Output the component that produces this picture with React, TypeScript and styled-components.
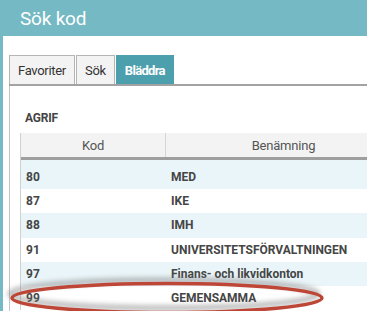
import React from "react";
import styled, { createGlobalStyle } from "styled-components";

const Global = createGlobalStyle`
  html, body { margin: 0; padding: 0; background: #ffffff; }
  body { font-family: Roboto, "Liberation Sans", Arial, sans-serif; }
`;

const Window = styled.div`
  position: relative;
  width: 367px;
  height: 311px;
  overflow: hidden;
  background: #74b9c3;
  display: flex;
  flex-direction: column;
`;

const Header = styled.div`
  height: 36px;
  flex: none;
  padding-left: 20px;
  display: flex;
  align-items: center;
  color: #ffffff;
  font-size: 19px;
  letter-spacing: -0.2px;
`;

const Body = styled.div`
  flex: 1;
  margin-left: 3px;
  background: #ffffff;
  padding: 19px 0 0 6px;
  display: flex;
  flex-direction: column;
  min-height: 0;
`;

const TabBar = styled.div`
  display: flex;
  border-bottom: 2px solid #a3a3a3;
`;

const Tab = styled.div<{ $active?: boolean }>`
  height: 28px;
  padding: 0 8px;
  margin-right: 1px;
  display: flex;
  align-items: center;
  font-size: 13px;
  letter-spacing: ${(p) => (p.$active ? "-0.7px" : "-0.3px")};
  border: 1px solid ${(p) => (p.$active ? "#4c9fac" : "#b5b5b5")};
  border-bottom: none;
  background: ${(p) => (p.$active ? "#4c9fac" : "#f3f3f3")};
  color: ${(p) => (p.$active ? "#ffffff" : "#333333")};
  font-weight: ${(p) => (p.$active ? 700 : 400)};
`;

const Panel = styled.div`
  flex: 1;
  border-left: 1px solid #c4c4c4;
  padding: 25px 0 0 10px;
`;

const Caption = styled.div`
  padding-left: 5px;
  font-size: 12px;
  font-weight: 700;
  color: #444444;
  letter-spacing: -0.2px;
  height: 22px;
`;

const Table = styled.div`
  width: 380px;
  border-left: 1px solid #d0d0d0;
`;

const HeadRow = styled.div`
  display: grid;
  grid-template-columns: 145px 1fr;
  height: 24px;
  background: #f3f3f3;
  border-bottom: 3px solid #9e9e9e;
`;

const HeadCell = styled.div<{ $divider?: boolean }>`
  display: flex;
  align-items: center;
  justify-content: center;
  font-size: 13px;
  color: #555555;
  letter-spacing: -0.2px;
  border-right: ${(p) => (p.$divider ? "1px solid #d6d6d6" : "none")};
`;

const RowGroup = styled.div`
  display: flex;
  flex-direction: column;
`;

const Row = styled.div<{ $striped?: boolean }>`
  display: grid;
  grid-template-columns: 145px 1fr;
  height: 24.3px;
  flex: none;
  background: ${(p) => (p.$striped ? "#eaf5f9" : "#ffffff")};
  &:first-child {
    height: 29px;
    padding-top: 4px;
    box-sizing: border-box;
  }
`;

const Cell = styled.div`
  display: flex;
  align-items: center;
  padding-left: 5px;
  font-size: 12px;
  font-weight: 700;
  color: #454545;
  letter-spacing: 0;
  white-space: nowrap;
`;

const Overlay = styled.svg`
  position: absolute;
  left: 0;
  top: 0;
  pointer-events: none;
`;

const rows = [
  ["80", "MED"],
  ["87", "IKE"],
  ["88", "IMH"],
  ["91", "UNIVERSITETSFÖRVALTNINGEN"],
  ["97", "Finans- och likvidkonton"],
  ["99", "GEMENSAMMA"],
];

export default function App() {
  return (
    <Window>
      <Global />
      <Header>Sök kod</Header>
      <Body>
        <TabBar>
          <Tab>Favoriter</Tab>
          <Tab>Sök</Tab>
          <Tab $active>Bläddra</Tab>
        </TabBar>
        <Panel>
          <Caption>AGRIF</Caption>
          <Table>
            <HeadRow>
              <HeadCell $divider>Kod</HeadCell>
              <HeadCell>Benämning</HeadCell>
            </HeadRow>
            <RowGroup>
              {rows.map(([k, n], i) => (
                <Row key={k} $striped={i % 2 === 0}>
                  <Cell>{k}</Cell>
                  <Cell>{n}</Cell>
                </Row>
              ))}
            </RowGroup>
          </Table>
        </Panel>
      </Body>
      <Overlay width="367" height="311" viewBox="0 0 367 311">
        <defs>
          <filter id="sh" x="-10%" y="-60%" width="120%" height="220%">
            <feGaussianBlur stdDeviation="2.5" />
          </filter>
        </defs>
        <ellipse cx="164" cy="294" rx="154" ry="14" fill="none" stroke="#7a7a7a" strokeWidth="5" opacity="0.55" filter="url(#sh)" />
        <ellipse cx="167" cy="298" rx="155" ry="14.5" fill="none" stroke="#bd4636" strokeWidth="3.5" />
      </Overlay>
    </Window>
  );
}
